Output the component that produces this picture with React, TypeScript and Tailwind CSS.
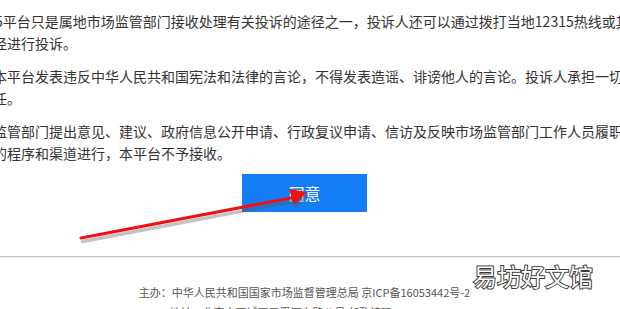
import React from "react";

const cjk = "font-['Noto_Sans_CJK_SC','Noto_Sans',sans-serif]";

function Arrow() {
  return (
    <svg
      className="absolute left-0 top-0 pointer-events-none"
      width="620"
      height="309"
      viewBox="0 0 620 309"
    >
      <g opacity="0.35" transform="translate(1.5 2.5)">
        <line x1="81" y1="239" x2="296" y2="198" stroke="#555" strokeWidth="3.5" strokeLinecap="round" />
        <polygon points="307,193 289,190 294,206" fill="#555" />
      </g>
      <line x1="81" y1="238" x2="296" y2="197" stroke="#ee1111" strokeWidth="3" strokeLinecap="round" />
      <polygon points="307,192 289,189 294,205" fill="#ee1111" />
    </svg>
  );
}

export default function App() {
  return (
    <div className={`relative w-[620px] h-[309px] overflow-hidden bg-white ${cjk}`}>
      <section className="-ml-[7px] pt-[10px] text-[14px] leading-[22px] text-[#333] whitespace-nowrap">
        <p className="-indent-[29px]">
          12315平台只是属地市场监管部门接收处理有关投诉的途径之一，投诉人还可以通过拨打当地12315热线或其他途
          <br />
          径进行投诉。
        </p>
        <p className="mt-[11px]">
          本平台发表违反中华人民共和国宪法和法律的言论，不得发表造谣、诽谤他人的言论。投诉人承担一切法律责
          <br />
          任。
        </p>
        <p className="mt-[11px]">
          监管部门提出意见、建议、政府信息公开申请、行政复议申请、信访及反映市场监管部门工作人员履职问题，
          <br />
          的程序和渠道进行，本平台不予接收。
        </p>
      </section>

      <div className="flex justify-center pr-[11px] mt-[10px]">
        <button className="w-[125px] h-[38px] bg-[#147df5] text-white text-[16px]">同意</button>
      </div>

      <div className="mt-[44px] h-px bg-[#c4c4c4] shadow-[0_1px_1px_rgba(0,0,0,0.08)]" />

      <footer className="pt-[25px] pr-[11px] text-center text-[11px] leading-[20px] text-[#555]">
        <p>主办：中华人民共和国国家市场监督管理总局 京ICP备16053442号-2</p>
        <p>地址：北京市西城区三里河东路八号 邮政编码：100820</p>
      </footer>

      <Arrow />

      <div className="absolute left-[473px] top-[261px] text-[24px] leading-[30px] text-white [-webkit-text-stroke:2px_#3a3a3a] [paint-order:stroke_fill]">
        易坊好文馆
      </div>
    </div>
  );
}
